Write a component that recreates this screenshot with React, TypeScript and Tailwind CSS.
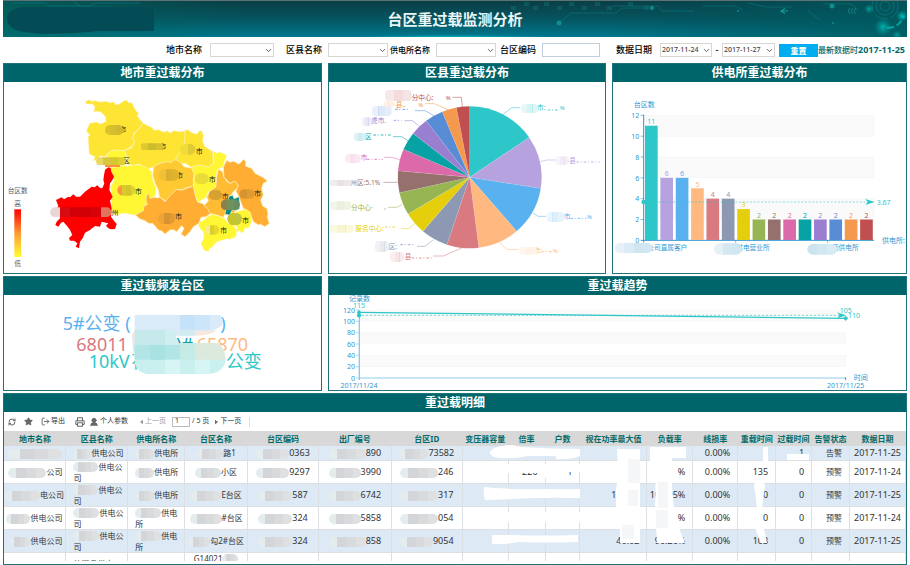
import { useId, type ReactNode } from "react";
import { ChevronDown, LogOut, Printer, RefreshCw, Star, UserRound } from "lucide-react";
import { clsx } from "clsx";

const PALETTE = [
  "#2ec7c9", "#b6a2de", "#5ab1ef", "#ffb980", "#d87a80",
  "#8d98b3", "#e5cf0d", "#97b552", "#95706d", "#dc69aa",
  "#07a2a4", "#9a7fd1", "#588dd5", "#f5994e", "#c05050",
];

const AXIS = "#3097d1";

// Pixelated patch that hides part of a label
function Mosaic({ x, y, w, h, colors, r = h / 2 }: {
  x: number;
  y: number;
  w: number;
  h: number;
  colors: string[];
  r?: number;
}) {
  const id = useId();
  const step = w / colors.length;
  return (
    <g>
      <clipPath id={id}>
        <rect x={x} y={y} width={w} height={h} rx={r} />
      </clipPath>
      <g clipPath={`url(#${id})`} shapeRendering="crispEdges">
        {colors.map((c, i) => (
          <rect key={i} x={x + i * step} y={y} width={step + 0.5} height={h} fill={c} />
        ))}
      </g>
    </g>
  );
}

function Panel({ title, children }: { title: string; children: ReactNode }) {
  return (
    <section className="min-w-0 border border-[#1d7377] bg-white">
      <h2 className="h-[18px] bg-[#00656a] text-center text-[12px] leading-[18px] font-bold text-white">{title}</h2>
      {children}
    </section>
  );
}

function Header() {
  return (
    <header className="relative overflow-hidden border-t border-[#5d7378] bg-linear-to-b from-[#0a3e45] via-[#045560] to-[#00778d]">
      <svg className="absolute inset-0 h-full w-full" viewBox="0 0 904 36" preserveAspectRatio="xMaxYMid slice" aria-hidden="true">
        <defs>
          <radialGradient id="glow">
            <stop offset="0" stopColor="#00d8c8" />
            <stop offset="1" stopColor="#00a0b0" stopOpacity="0" />
          </radialGradient>
          <linearGradient id="leftTone">
            <stop offset="0" stopColor="#00665f" />
            <stop offset="1" stopColor="#00665f" stopOpacity="0" />
          </linearGradient>
          <linearGradient id="rightTone">
            <stop offset="0" stopColor="#00555d" stopOpacity="0" />
            <stop offset="1" stopColor="#005a5e" />
          </linearGradient>
        </defs>
        <rect width="240" height="36" fill="url(#leftTone)" opacity="0.7" />
        <rect x="600" width="304" height="36" fill="url(#rightTone)" opacity="0.8" />
        <ellipse cx="450" cy="37" rx="110" ry="4" fill="url(#glow)" />
        <g stroke="#0c8587" fill="none" strokeWidth="0.8" opacity="0.6">
          <path d="M10 2h32l4 3h40l6-3h45M70 0l8 6h30M556 22l12-10h45l6-5h28" />
          <path d="M610 5h45l4 5h32M700 5h32l8 4M745 2l18 4h26M805 10l12 9" />
          <path d="M820 3h28l7 6" />
        </g>
        <g fill="#127273" opacity="0.45">
          {[508, 521, 530, 541, 554, 566, 579, 592, 604, 625, 641].map((x, i) => (
            <rect key={x} x={x} y={i % 2 ? 1 : 5} width="5" height="4" />
          ))}
        </g>
        <g fill="#0e8d8e">
          <circle cx="556" cy="22" r="2.5" />
          <circle cx="649" cy="7" r="2" />
          <circle cx="829" cy="5" r="2.5" />
          <circle cx="735" cy="10" r="1" />
          <circle cx="830" cy="22" r="1" />
        </g>
        <path d="M782 7.5l-4 2.500l4 2.500M778 10h7" stroke="#14999b" strokeWidth="1.2" fill="none" />
        <path d="M847 7l-2 3l2 3M850 7l-2 3l2 3M853 7l-2 3l2 3" stroke="#168b8d" strokeWidth="0.8" fill="none" />
        <g fill="none" stroke="#11868a" opacity="0.8">
          <circle cx="882" cy="5" r="13" strokeDasharray="14 3" strokeWidth="0.7" />
          <circle cx="882" cy="5" r="9" strokeWidth="0.7" />
          <circle cx="882" cy="5" r="5" strokeWidth="0.7" />
          <path d="M884 27q12 0 17-12" stroke="#00b5b4" strokeWidth="2" strokeDasharray="7 3" />
        </g>
        <circle cx="880" cy="26" r="9" fill="url(#glow)" opacity="0.7" />
        <circle cx="866" cy="8" r="5" fill="url(#glow)" opacity="0.6" />
        <circle cx="899" cy="15" r="6" fill="url(#glow)" opacity="0.8" />
        <circle cx="894" cy="34" r="5" fill="url(#glow)" opacity="0.5" />
        <path d="M4 15q5-9 20-9h127v24h-55q-50 5-75 1q-17-2-17-16z" fill="#034b55" />
      </svg>
      <h1 className="relative text-center text-[15px] leading-9 font-bold text-[#eaf5f6]">台区重过载监测分析</h1>
    </header>
  );
}

function SelectBox({ id, value, className }: { id: string; value?: string; className: string }) {
  return (
    <div className={clsx("relative", className)}>
      <select id={id} defaultValue={value ?? ""} className="block h-3.5 w-full appearance-none border border-[#d6d6d2] bg-white pl-px text-[7px] leading-3 text-[#444]">
        <option value={value ?? ""}>{value ?? ""}</option>
      </select>
      <ChevronDown size={9} strokeWidth={2.5} className="pointer-events-none absolute top-[3px] right-px text-[#555]" />
    </div>
  );
}

function Filters() {
  return (
    <form className="flex h-[26px] items-center justify-end pr-0.5 text-[9px] font-medium whitespace-nowrap text-black" onSubmit={(e) => e.preventDefault()}>
      <label htmlFor="city" className="mr-2">地市名称</label>
      <SelectBox id="city" className="mr-3 w-16" />
      <label htmlFor="county" className="mr-1.5">区县名称</label>
      <SelectBox id="county" className="w-[60px]" />
      <label htmlFor="station" className="mr-1.5 ml-0.5 text-[8px]">供电所名称</label>
      <SelectBox id="station" className="mr-1 w-[60px]" />
      <label htmlFor="code" className="mr-1.5">台区编码</label>
      <input id="code" className="mr-4 h-3.5 w-[58px] border border-[#c3cedc] px-1" />
      <label htmlFor="from" className="mr-2">数据日期</label>
      <SelectBox id="from" value="2017-11-24" className="w-[52px]" />
      <label htmlFor="to" className="w-2.5 text-center">-</label>
      <SelectBox id="to" value="2017-11-27" className="mr-1 w-[53px]" />
      <button type="reset" className="h-[13px] w-[39px] bg-[#00adee] text-[8px] leading-[13px] font-bold text-white">重置</button>
      <span className="text-[8px] font-medium text-[#006b6b]">最新数据时</span>
      <b className="text-[9px] text-[#006b6b]">2017-11-25</b>
    </form>
  );
}

const REGIONS: [string, string][] = [
  ["#fee433", "255,65 268,59 276,64 285,62 300,66 318,64 330,68 343,66 347,74 358,72 372,62 380,60 386,69 396,68 402,82 408,92 416,100 412,108 421,120 430,130 418,145 402,160 398,175 404,185 395,200 380,207 372,212 345,210 325,218 315,230 300,228 294,238 280,243 285,230 268,222 266,198 264,170 270,165 260,155 262,145 270,130 290,126 300,132 318,125 316,110 305,98 294,94 282,96 284,80 278,72 260,72"],
  ["#fee433", "430,130 445,138 455,142 463,151 476,149 490,156 503,153 510,160 520,152 540,155 555,153 557,170 550,200 538,220 528,232 530,245 500,248 480,250 462,260 448,266 430,262 420,252 400,256 380,252 385,238 372,212 395,203 404,185 398,172 405,158 418,145"],
  ["#fee433", "555,150 565,150 575,158 590,163 597,154 605,152 610,165 608,185 615,200 628,208 638,215 640,250 625,262 600,255 575,262 555,250 545,250 530,245 528,232 540,215 552,195 555,170"],
  ["#fff733", "315,265 340,262 360,258 380,258 400,256 420,254 440,262 455,275 458,300 468,325 466,345 450,368 432,378 430,395 418,404 400,405 375,399 360,402 345,405 333,385 335,350 332,320 343,300"],
  ["#fff733", "320,225 330,214 350,210 372,212 380,225 380,240 375,256 345,260 318,250"],
  ["#ff0000", "315,270 325,262 332,264 334,275 342,290 336,302 330,310 328,330 338,350 330,362 335,385 333,410 340,420 350,432 345,447 333,448 325,445 318,437 325,430 305,425 300,440 285,438 270,450 255,458 248,475 240,485 237,505 227,500 232,490 222,482 210,482 207,474 217,465 210,450 203,440 190,425 183,428 175,440 166,435 170,425 180,415 178,400 170,385 175,378 168,360 185,352 192,358 205,350 210,352 220,343 228,350 240,350 255,335 275,320 284,322 292,316 300,324 307,325 313,310 310,300 312,285"],
  ["#ffc933", "462,258 480,250 500,245 515,247 520,240 530,240 545,250 552,260 575,264 583,280 580,300 580,318 560,323 545,330 530,328 515,345 510,360 495,362 478,350 475,330 465,310 458,285"],
  ["#ffad33", "440,345 447,342 450,355 466,352 472,354 480,352 495,365 512,345 530,328 545,331 560,325 570,322 580,316 586,345 592,365 610,372 625,385 636,398 618,410 603,412 597,430 580,440 570,455 555,470 543,462 552,445 545,437 530,455 520,449 510,450 495,462 485,453 475,450 458,430 446,430 435,422 420,417 406,405 430,392 432,378 442,374 438,360"],
  ["#fff733", "575,262 600,255 625,262 642,250 640,213 650,220 660,216 680,225 675,240 668,262 652,268 648,290 650,315 640,330 625,335 618,352 595,367 586,345 580,318 583,285"],
  ["#ffbb33", "655,268 668,275 672,292 680,304 690,310 705,302 715,315 712,325 700,335 690,350 720,362 715,385 700,400 680,395 670,412 650,405 630,400 622,385 612,378 625,362 620,350 630,335 648,320 650,290"],
  ["#ffad33", "680,241 690,247 700,243 715,252 722,248 730,238 738,245 736,258 755,265 765,280 785,290 795,296 802,304 790,310 785,325 790,345 782,360 788,378 800,385 804,400 802,412 808,430 795,440 780,432 775,435 760,425 748,395 730,385 720,360 712,340 708,335 715,315 705,303 690,310 672,292 670,262"],
  ["#008b8b", "686,350 698,345 702,356 718,350 718,388 695,392 690,406 675,403 678,388 672,372 685,360"],
  ["#fff733", "700,400 720,392 740,388 752,400 755,425 750,436 745,445 735,443 733,451 725,460 720,452 710,455 712,440 690,432 682,415"],
  ["#fff733", "600,425 610,422 620,412 638,403 655,408 672,415 685,430 700,435 710,450 708,470 690,478 680,476 670,480 650,485 640,497 635,505 630,503 625,515 612,510 603,490 612,475 610,455 602,448 595,435"],
];

// [text, x, y] followed by the patch in front of it: x, y, width, height and shades
const CITIES: [string, number, number, number, number, number, number, string[]][] = [
  ["市", 358, 155, 315, 135, 55, 30, ["#d8c32c", "#d4bd30", "#d0ba2b"]],
  ["市", 478, 206, 422, 190, 68, 20, ["#dfc92e", "#cdbb2e", "#d7c22d"]],
  ["市", 587, 222, 540, 192, 46, 32, ["#f0dc38", "#e0cb35"]],
  ["区", 368, 250, 288, 232, 88, 24, ["#e9d862", "#d9c83e", "#d4c82e", "#dfd132"]],
  ["市", 528, 295, 476, 268, 62, 34, ["#f2c034", "#dcb02e", "#e0b32e"]],
  ["市", 626, 307, 584, 280, 42, 32, ["#eedb38", "#e7dc3a"]],
  ["市", 404, 343, 352, 315, 54, 32, ["#ff9342", "#d8cb2a", "#d3c52c", "#ddd22e"]],
  ["市", 665, 356, 626, 330, 40, 30, ["#dba231", "#d1a32f"]],
  ["市", 762, 348, 718, 328, 46, 28, ["#d69430", "#e09c33"]],
  ["州", 334, 406, 150, 382, 184, 30, ["#ecd5d6", "#d80a12", "#d40009", "#d10007", "#d70209", "#e2735c"]],
  ["市", 525, 416, 474, 398, 52, 34, ["#f0a437", "#d69330", "#e29b32"]],
  ["市", 726, 428, 682, 398, 44, 38, ["#c6c52c", "#bdc63e"]],
  ["市", 660, 460, 614, 436, 44, 28, ["#f5ec8c", "#dccf2c", "#e6da2d"]],
];

function CityMap() {
  return (
    <svg viewBox="12 6 951 573" className="block h-auto w-full" role="img" aria-label="地市重过载分布">
      <defs>
        <linearGradient id="heat" x2="0" y2="1">
          <stop offset="0" stopColor="#ff0000" />
          <stop offset="0.5" stopColor="#ff9933" />
          <stop offset="1" stopColor="#ffff33" />
        </linearGradient>
      </defs>
      {REGIONS.map(([fill, points], i) => (
        <polygon key={i} points={points} fill={fill} stroke="#fff3b8" strokeWidth={fill === "#ff0000" ? 0 : 2} strokeLinejoin="round" />
      ))}
      <rect x="315" y="252" width="45" height="9" fill="#fc9140" />
      <g fontSize="21" fill="#222">
        {CITIES.map(([name, tx, ty, x, y, w, h, colors], i) => (
          <g key={i}>
            <text x={tx} y={ty}>{name}</text>
            <Mosaic x={x} y={y} w={w} h={h} colors={colors} />
          </g>
        ))}
      </g>
      <Mosaic x={662} y={358} w={58} h={32} colors={["#87834b", "#70905c", "#668c61"]} />
      <g fontSize="20" fill="#4d6173">
        <text x="23" y="338">台区数</text>
        <text x="43" y="377">高</text>
        <text x="43" y="557">低</text>
      </g>
      <rect x="43" y="388" width="20" height="143" fill="url(#heat)" />
    </svg>
  );
}

const SLICE_ENDS = [55.8, 99, 139.3, 172.7, 198.4, 220.5, 238.8, 257.4, 275.3, 293.2, 308.2, 322.8, 337.7, 349.4, 360];

function slicePath(from: number, to: number) {
  const at = (deg: number) => {
    const a = (deg * Math.PI) / 180;
    return `${434 + 216 * Math.sin(a)} ${292 - 213 * Math.cos(a)}`;
  };
  return `M434 292L${at(from)}A216 213 0 0 1 ${at(to)}Z`;
}

type PieLabel = { line: string; text: string; x: number; y: number; patch: number[]; dash?: number[]; tail?: [string, number] };

const PIE_LABELS: PieLabel[] = [
  { line: "534,103 560,83 586,83", text: "市:", x: 636, y: 91, patch: [589, 72, 50, 28], dash: [668, 90, 700], tail: ["%", 704] },
  { line: "646,245 665,240 690,240", text: "县", x: 733, y: 248, patch: [690, 229, 42, 26], dash: [754, 246, 824] },
  { line: "624,399 640,409 664,409", text: "市", x: 716, y: 417, patch: [665, 396, 52, 30], dash: [736, 415, 784], tail: ["%", 786] },
  { line: "523,488 548,509 580,509", text: "市:", x: 626, y: 518, patch: [582, 500, 54, 24], dash: [650, 515, 682], tail: ["%", 683] },
  { line: "410,504 355,528 324,528", text: "县", x: 239, y: 536, patch: [195, 516, 42, 30], dash: [260, 534, 320] },
  { line: "325,479 300,499 276,499", text: "区:", x: 191, y: 506, patch: [150, 482, 42, 34], dash: [226, 494, 270] },
  { line: "270,430 250,446 228,446", text: "服务中心:", x: 91, y: 453, patch: [12, 434, 74, 24], dash: [180, 441, 212] },
  { line: "232,374 215,382 190,382", text: "分中心·", x: 78, y: 389, patch: [14, 364, 65, 26], dash: [178, 387, 183] },
  { line: "217,307 175,307", text: "州区:5.1%", x: 76, y: 314, patch: [12, 299, 68, 20] },
  { line: "224,239 200,232 178,232", text: "市", x: 107, y: 241, patch: [60, 222, 46, 28], dash: [126, 238, 174] },
  { line: "249,182 230,170 204,170", text: "区", x: 120, y: 178, patch: [86, 158, 36, 26], dash: [145, 165, 198] },
  { line: "284,139 262,122 238,122", text: "虎市.", x: 138, y: 130, patch: [110, 112, 30, 26], dash: [206, 121, 230] },
  { line: "327,107 300,92 270,92", text: "", x: 200, y: 96, patch: [140, 78, 60, 30], dash: [210, 88, 250] },
  { line: "369,89 328,71 300,71", text: "县..", x: 212, y: 81, patch: [174, 64, 36, 16], tail: ["%", 280] },
  { line: "412,82 409,52 382,52", text: "分中心:", x: 260, y: 59, patch: [180, 30, 80, 34], tail: ["%", 362] },
];

function PieChart() {
  return (
    <svg viewBox="12 6 828 573" className="block h-auto w-full" role="img" aria-label="区县重过载分布">
      {SLICE_ENDS.map((end, i) => (
        <path key={end} d={slicePath(SLICE_ENDS[i - 1] ?? 0, end)} fill={PALETTE[i]} stroke="#fff" strokeOpacity="0.25" />
      ))}
      {PIE_LABELS.map(({ line, text, x, y, patch, dash, tail }, i) => (
        <g key={i} fill={PALETTE[i]} fontSize="20">
          <polyline points={line} fill="none" stroke={PALETTE[i]} strokeWidth="2" strokeOpacity="0.8" />
          <text x={x} y={y}>{text}</text>
          {tail && <text x={tail[1]} y={y} fontSize="18">{tail[0]}</text>}
          {dash && <path d={`M${dash[0]} ${dash[1]}H${dash[2]}`} stroke={PALETTE[i]} strokeWidth="3" strokeDasharray="8 5 3 6" strokeOpacity="0.8" />}
          <rect x={patch[0]} y={patch[1]} width={patch[2]} height={patch[3]} rx="12" fill="#fff" />
          <Mosaic
            x={patch[0]}
            y={patch[1]}
            w={patch[2]}
            h={patch[3]}
            r={12}
            colors={[`${PALETTE[i]}20`, `${PALETTE[i]}33`, `${PALETTE[i]}28`]}
          />
        </g>
      ))}
    </svg>
  );
}

const BARS = [11, 6, 6, 5, 4, 4, 3, 2, 2, 2, 2, 2, 2, 2, 2];

function BarChart() {
  const y = (v: number) => 481 - v * 31.25;
  return (
    <svg viewBox="15 6 879 573" className="block h-auto w-full" role="img" aria-label="供电所重过载分布">
      {[12, 8, 4].map((v) => (
        <rect key={v} x="108" y={y(v)} width="690" height="62.5" fill="#fafafa" stroke="#f1f1f1" />
      ))}
      <g stroke={AXIS} strokeWidth="3">
        <path d="M107 104V487M98 481H798" />
        <path d="M383 481v7M659 481v7" strokeWidth="2" />
        {[2, 4, 6, 8, 10, 12].map((v) => (
          <path key={v} d={`M98 ${y(v)}h9`} strokeWidth="2" />
        ))}
      </g>
      <g fontSize="21" fill={AXIS}>
        {[0, 2, 4, 6, 8, 10, 12].map((v) => (
          <text key={v} x="94" y={y(v) + 8} textAnchor="end">{v}</text>
        ))}
        <text x="77" y="81">台区数</text>
        <text x="822" y="488">供电所:</text>
        <text x="118" y="511" fontSize="20">公司直属客户</text>
        <text x="365" y="511" fontSize="20">天供电营业所</text>
        <text x="612" y="511" fontSize="20">横山营沥供电所</text>
      </g>
      {BARS.map((v, i) => (
        <g key={i} fill={PALETTE[i]}>
          <rect x={111 + i * 46.1} y={y(v)} width="38" height={v * 31.25 - 1} />
          <text x={130 + i * 46.1} y={y(v) - 5} fontSize="21" textAnchor="middle">{v}</text>
        </g>
      ))}
      <path d="M107 366H775" stroke="#2ec7c9" strokeWidth="2" strokeDasharray="6 5" opacity="0.8" />
      <circle cx="107" cy="366" r="7" fill="#2ec7c9" />
      <path d="M772 357l28 9l-28 9l7-9z" fill="#2ec7c9" />
      <text x="806" y="374" fontSize="21" fill="#2ec7c9">3.67</text>
      <Mosaic x={20} y={489} w={114} h={30} colors={["#e7f1f7", "#dbebf5", "#cfe6f1", "#d3e7f3"]} />
      <Mosaic x={318} y={490} w={84} h={34} colors={["#e5f1f7", "#d3e8f2", "#d0e6f1"]} />
      <Mosaic x={598} y={492} w={90} h={32} colors={["#cde3ed", "#d1e8f2", "#d9ecf4"]} />
    </svg>
  );
}

function WordCloud() {
  return (
    <svg viewBox="12 60 951 285" className="block h-auto w-full" role="img" aria-label="重过载频发台区">
      <g fontSize="54">
        <text x="188" y="165" fill="#5ab1ef">5#公变 (</text>
        <text x="661" y="165" fill="#5ab1ef">)</text>
        <text x="229" y="228" fill="#d87a80">68011</text>
        <text x="528" y="228" fill="#07a2a4">)#</text>
        <text x="590" y="228" fill="#ffb980">65870</text>
        <text x="266" y="279" fill="#2ec7c9">10kV</text>
        <text x="394" y="279" fill="#2ec7c9">花</text>
        <text x="677" y="279" fill="#2ec7c9">公变</text>
      </g>
      <path d="M404 120H660Q674 134 666 150Q650 168 585 182H528V186H404Z" fill="#d9ebf9" />
      <path d="M540 120h45v44h-45z" fill="#c5e2f8" />
      <path d="M585 120h45v44h-45z" fill="#cde5f9" />
      <path d="M540 165h45l-8 17h-37z" fill="#d0ecf0" />
      <path d="M585 168l64-2q-10 14-64 17z" fill="#f6e7df" />
      <path d="M404 165H520L534 205H655Q680 225 676 262Q665 297 620 297H440Q404 292 404 250Q392 200 404 165z" fill="#c9f0ef" />
      <path d="M404 165h91v45h-91z" fill="#c5e9ea" />
      <path d="M495 165h25l16 45h-41z" fill="#d0edef" />
      <path d="M404 210h136v44H404z" fill="#b2e6e6" />
      <path d="M450 210h45v44h-45z" fill="#a9e2e3" />
      <path d="M540 205h45v49h-45z" fill="#c5ebe6" />
      <path d="M585 205h70q22 20 21 49h-91z" fill="#dceade" />
      <path d="M404 165q-18 22 0 45z" fill="#eee7e8" />
      <path d="M495 254h45v43h-45zM585 254h45v42h-45z" fill="#d6f5f4" />
    </svg>
  );
}

function TrendChart() {
  const y = (v: number) => 309 - v * 1.7;
  return (
    <svg viewBox="12 60 1731 285" className="block h-auto w-full" role="img" aria-label="重过载趋势">
      {[120, 80, 40].map((v) => (
        <rect key={v} x="103" y={y(v)} width="1459" height="34" fill="#fafafa" stroke="#f1f1f1" />
      ))}
      <path d="M103 309H1562" stroke="#b3dcf3" strokeWidth="5" />
      <path d="M103 105V315" stroke="#8cc8ee" strokeWidth="4" />
      <path d="M1562 307v8" stroke={AXIS} strokeWidth="3" />
      <g fontSize="21" fill={AXIS}>
        {[0, 20, 40, 60, 80, 100, 120].map((v) => (
          <g key={v}>
            <path d={`M93 ${y(v)}h9`} stroke="#8cc8ee" strokeWidth="2" />
            <text x="90" y={y(v) + 8} textAnchor="end">{v}</text>
          </g>
        ))}
        <text x="72" y="79">记录数</text>
        <text x="102" y="338" textAnchor="middle">2017/11/24</text>
        <text x="1562" y="338" textAnchor="middle">2017/11/25</text>
        <text x="1586" y="316">时间</text>
      </g>
      <g fill="#2ec7c9" stroke="#2ec7c9">
        <path d="M102 112L1562 130" strokeWidth="4" />
        <path d="M110 121H1545" strokeWidth="2" strokeDasharray="7 5" />
        <circle cx="102" cy="112" r="5" />
        <circle cx="102" cy="121" r="6" />
        <path d="M1538 113l24 8l-24 8l6-8z" />
        <path d="M1562 123l7 7l-7 7l-7-7z" />
      </g>
      <g fontSize="21" fill="#2ec7c9">
        <text x="102" y="99" textAnchor="middle">115</text>
        <text x="1562" y="115" textAnchor="middle">105</text>
        <text x="1569" y="129">110</text>
      </g>
    </svg>
  );
}

type Column = { title: string; width: number; cell: string };

const COLUMNS: Column[] = [
  { title: "地市名称", width: 62, cell: "pr-[3px] text-right" },
  { title: "区县名称", width: 62, cell: "pr-0.5 pl-[7px] text-left" },
  { title: "供电所名称", width: 57, cell: "pr-1 pl-[7px] text-left" },
  { title: "台区名称", width: 63, cell: "text-center" },
  { title: "台区编码", width: 71, cell: "text-center text-[9px]" },
  { title: "出厂编号", width: 73, cell: "text-center text-[9px]" },
  { title: "台区ID", width: 71, cell: "text-center text-[9px]" },
  { title: "变压器容量", width: 46, cell: "text-center text-[9px]" },
  { title: "倍率", width: 37, cell: "pr-[7px] text-right text-[9px]" },
  { title: "户数", width: 35, cell: "pr-[7px] text-right text-[9px]" },
  { title: "视在功率最大值", width: 67, cell: "pr-[7px] text-right text-[9px]" },
  { title: "负载率", width: 46, cell: "pr-[7px] text-right text-[9px]" },
  { title: "线损率", width: 45, cell: "pr-[7px] text-right text-[9px]" },
  { title: "重载时间", width: 38, cell: "pr-[7px] text-right text-[9px]" },
  { title: "过载时间", width: 36, cell: "pr-[7px] text-right text-[9px]" },
  { title: "告警状态", width: 38, cell: "pr-[7px] text-right" },
  { title: "数据日期", width: 56, cell: "text-center text-[9px]" },
];

// A leading number is the width of the masked part of the value
type Cell = [number, string] | string;

const ROWS: Cell[][] = [
  [[54, ""], [18, "供电公司"], [19, "供电所"], [27, "路1"], [33, "0363"], [37, "890"], [29, "73582"], "", "20", "", "41.2", "", "0.00%", "0", "1", "告警", "2017-11-25"],
  [[38, "公司"], [25, "供电公司"], [19, "供电所"], [26, "小区"], [33, "9297"], [32, "3990"], [38, "246"], "", "220", "1", "", "%", "0.00%", "135", "0", "预警", "2017-11-24"],
  [[36, "电公司"], [25, "供电公司"], [19, "供电所"], [31, "E台区"], [34, "587"], [32, "6742"], [38, "317"], "", "", "", "1000.0", "100.05%", "0.00%", "0", "0", "预警", "2017-11-25"],
  [[24, "供电公司"], [26, "供电公司"], [26, "供电所"], [32, "#台区"], [34, "324"], [32, "5858"], [38, "054"], "", "", "", "", "%", "0.00%", "0", "0", "预警", "2017-11-24"],
  [[20, "供电公司"], [26, "供电公司"], [26, "供电所"], [22, "勾2#台区"], [34, "324"], [37, "858"], [33, "9054"], "", "", "", "40.02", "90.26%", "0.00%", "103", "0", "预警", "2017-11-25"],
];

function Masked({ value }: { value: Cell }) {
  if (typeof value === "string") return value;
  const [width, text] = value;
  return (
    <>
      <span
        className="-my-1 inline-block h-2.5 rounded-full bg-[linear-gradient(90deg,#e4eced_22%,#d3d5d8_22%_48%,#d8dadc_48%_74%,#dee0e2_74%)] align-middle"
        style={{ width }}
      />
      {text}
    </>
  );
}

// White strokes painted over the numeric columns
function Strokes() {
  return (
    <svg className="pointer-events-none absolute inset-0 h-full w-full" viewBox="4 431 902 130" preserveAspectRatio="none" aria-hidden="true">
      <g fill="#fff">
        <path d="M490 452q3-6 22-7l10 2q30 2 58 2v7q-10 4-24 3v-3h-28q-20 4-34 1q-4-2-4-5z" />
        <path d="M486 465h20v8h-20zM506 464h74v8h-30v6h-10v-5h-34z" />
        <path d="M484 487q10 1 30 2h66v9q-40-1-66 1l-29 1q-2-6-1-13z" />
        <path d="M486 512h96v10h-96z" />
        <path d="M492 535h20q30 1 66 0v7q-30 1-60 0l-12 2h-14z" />
        <path d="M617 449h23v94h-20v-22l-4-11v-20l2-14z" />
        <path d="M650 447h36v11h-14v30l2 20l3 15l8 20h-28l-2-32l1-50h-6z" />
        <path d="M763 447h5v18h-5zM754 484q10-6 11 2l-3 22v12l5 23h-6l-6-15l2-20z" />
        <path d="M787 454h22v6h-22z" />
      </g>
      <path d="M628 459h12v24h-12zM628 490h10v16h-10zM622 525h12v14h-12zM658 482h10v26h-10zM656 510h12v18h-12z" fill="#f4f6f8" />
    </svg>
  );
}

function Toolbar() {
  return (
    <div className="flex h-[19px] items-center pl-1 text-[7px] whitespace-nowrap text-[#333]">
      <button aria-label="刷新" className="mr-2 text-[#666]"><RefreshCw size={8} strokeWidth={3} /></button>
      <button aria-label="收藏" className="mr-2 text-[#666]"><Star size={9} fill="currentColor" /></button>
      <button className="mr-2.5 flex items-center gap-px"><LogOut size={9} strokeWidth={2.5} className="text-[#666]" />导出</button>
      <button aria-label="打印" className="mr-1 text-[#666]"><Printer size={10} strokeWidth={2.5} /></button>
      <button className="mr-3 flex items-center gap-px"><UserRound size={10} fill="currentColor" className="text-[#666]" />个人参数</button>
      <button className="mr-1.5 flex items-center gap-0.5 text-[#999]">
        <svg width="3" height="6" viewBox="0 0 4 6" fill="currentColor"><path d="M4 0v6L0 3z" /></svg>上一页
      </button>
      <input aria-label="页码" defaultValue="1" className="mr-0.5 h-2.5 w-[18px] border border-[#bbb] pl-0.5" />
      <span className="mr-1.5">/ 5 页</span>
      <button className="flex items-center gap-0.5">
        <svg width="3" height="6" viewBox="0 0 4 6" fill="#666"><path d="M0 0v6l4-3z" /></svg>下一页
      </button>
      <span className="ml-2 h-2.5 w-px bg-[#ddd]" />
    </div>
  );
}

function DetailTable() {
  return (
    <div className="relative mb-[3px] h-[130px] overflow-hidden">
      <table className="w-full table-fixed border-collapse text-[8px] leading-[11px] text-[#333]">
        <colgroup>
          {COLUMNS.map((c) => (
            <col key={c.title} style={{ width: `${(c.width / 903) * 100}%` }} />
          ))}
        </colgroup>
        <thead>
          <tr className="h-[15px] bg-[#d8d8d8]">
            {COLUMNS.map((c) => (
              <th key={c.title} className="p-0 text-center font-bold whitespace-nowrap text-[#006b6b]">{c.title}</th>
            ))}
          </tr>
        </thead>
        <tbody>
          {ROWS.map((row, r) => (
            <tr key={r} className={clsx(r === 0 ? "h-[14px]" : "h-[23px]", r % 2 === 0 ? "bg-[#dde9f5]" : "bg-white")}>
              {row.map((value, c) => (
                <td key={c} className={clsx("border-r border-b border-[#dcdfe3] py-0", COLUMNS[c].cell, c !== 1 && c !== 2 && "whitespace-nowrap", r === 0 && "whitespace-nowrap")}>
                  <Masked value={value} />
                </td>
              ))}
            </tr>
          ))}
          <tr className="h-[33px]">
            {COLUMNS.map((c, i) => (
              <td key={c.title} className={clsx("border-r border-[#dcdfe3] py-0", i === 3 ? "align-top whitespace-nowrap" : "align-middle", c.cell)}>
                {i === 1 && "竹溪县供电公司"}
                {i === 3 && <>G14021<Masked value={[16, ""]} /></>}
              </td>
            ))}
          </tr>
        </tbody>
      </table>
      <Strokes />
    </div>
  );
}

export default function App() {
  return (
    <main className="bg-white px-[3px] font-['Noto_Sans','Noto_Sans_CJK_SC',sans-serif]">
      <Header />
      <Filters />
      <div className="flex flex-col gap-0.5">
        <div className="grid grid-cols-[319fr_278fr_295fr] gap-1.5">
          <Panel title="地市重过载分布"><CityMap /></Panel>
          <Panel title="区县重过载分布"><PieChart /></Panel>
          <Panel title="供电所重过载分布"><BarChart /></Panel>
        </div>
        <div className="grid grid-cols-[319fr_579fr] gap-1.5">
          <Panel title="重过载频发台区"><WordCloud /></Panel>
          <Panel title="重过载趋势"><TrendChart /></Panel>
        </div>
        <Panel title="重过载明细">
          <Toolbar />
          <DetailTable />
        </Panel>
      </div>
    </main>
  );
}
